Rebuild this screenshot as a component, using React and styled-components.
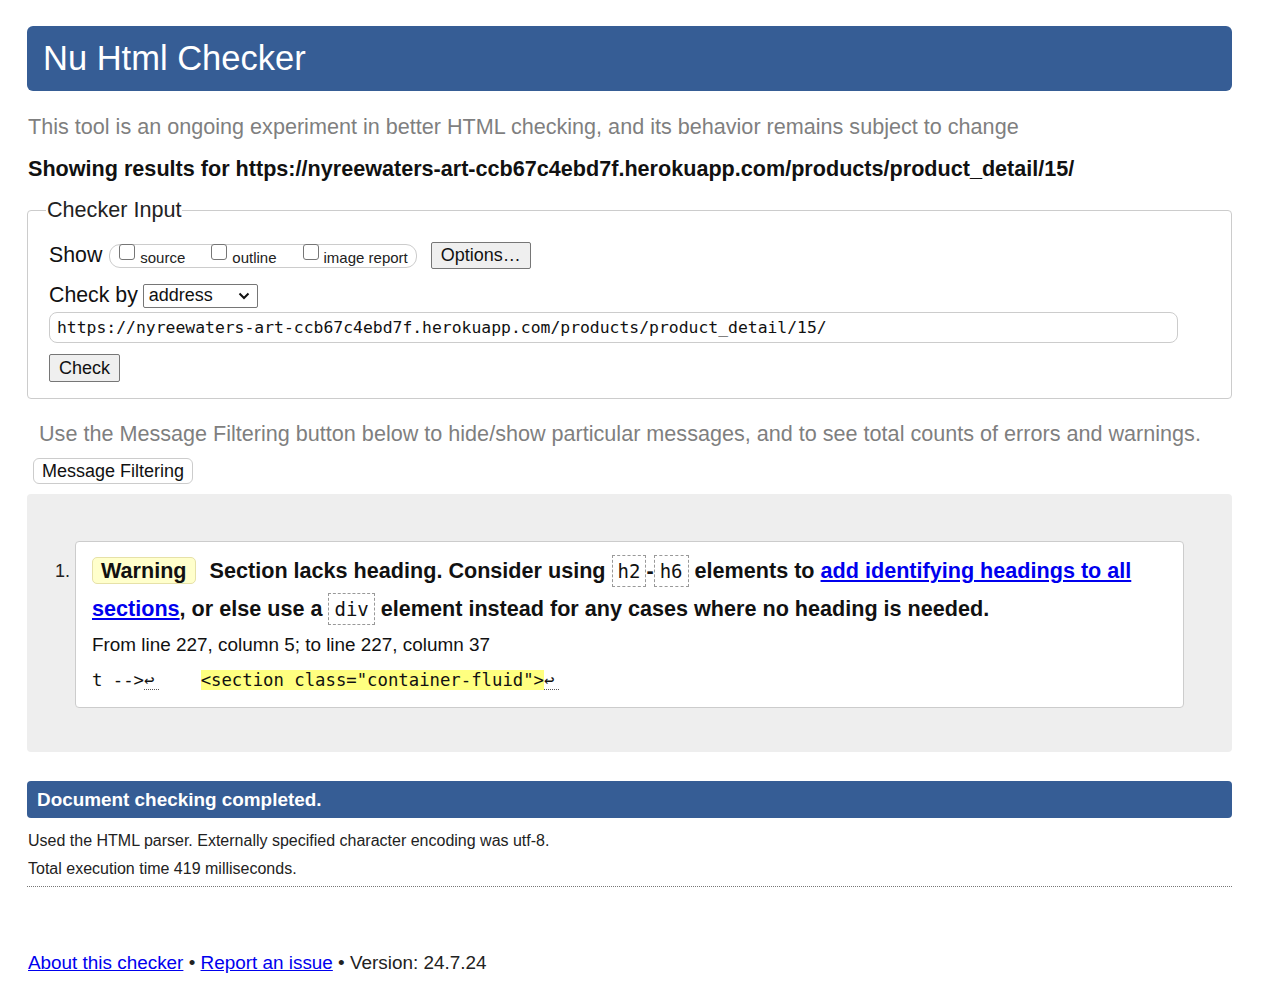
import React from "react";
import styled, { createGlobalStyle } from "styled-components";

const Global = createGlobalStyle`
  html, body { margin: 0; padding: 0; background: #fff; }
  body { font-family: Arial, "Liberation Sans", sans-serif; color: #111; }
`;

const Page = styled.div`
  padding: 26px 32px 0 27px;
`;

const Header = styled.h1`
  margin: 0;
  height: 65px;
  display: flex;
  align-items: center;
  padding: 0 16px;
  background: #365d95;
  color: #fff;
  font-size: 34.5px;
  font-weight: normal;
  border-radius: 6px;
`;

const Lead = styled.p`
  margin: ${(p) => p.$mt ?? 22}px 0 0 ${(p) => p.$indent || 1}px;
  font-size: 21.6px;
  color: #7f7f7f;
  line-height: 27px;
`;

const Results = styled.p`
  margin: 15px 0 0 1px;
  font-size: 21.6px;
  font-weight: bold;
  color: #111;
  line-height: 27px;
`;

const Fieldset = styled.fieldset`
  margin: 15px 0 0 0;
  border: 1px solid #ccc;
  border-radius: 4px;
  padding: 19px 21px 16px 21px;
`;

const Legend = styled.legend`
  font-size: 21.6px;
  padding: 0 1px;
  margin-left: -3px;
  color: #222;
`;

const Row = styled.div`
  display: flex;
  align-items: center;
  margin-top: ${(p) => p.$mt || 0}px;
`;

const Label = styled.span`
  font-size: 21.3px;
  color: #111;
  margin-right: ${(p) => p.$mr || 5}px;
`;

const Pill = styled.div`
  display: flex;
  align-items: center;
  height: 22px;
  border: 1px solid #ccc;
  border-radius: 11px;
  padding: 0 8px 0 9px;
  gap: 26px;
`;

const CheckLabel = styled.label`
  display: flex;
  align-items: flex-start;
  height: 22px;
  font-size: 15px;
  color: #222;
`;

const Box = styled.span`
  width: 16px;
  height: 16px;
  border: 1px solid #767676;
  border-radius: 3px;
  box-sizing: border-box;
  margin: -1px 5px 0 0;
  background: #fff;
`;

const BoxText = styled.span`
  align-self: flex-end;
  line-height: 19px;
`;

const Button = styled.button`
  font-family: Arial, "Liberation Sans", sans-serif;
  font-size: 18px;
  color: #111;
  background: #efefef;
  border: 1px solid #767676;
  border-radius: 2px;
  height: ${(p) => p.$h || 27}px;
  padding: 0 9px;
  margin-left: ${(p) => p.$ml || 0}px;
`;

const Select = styled.div`
  display: flex;
  align-items: center;
  justify-content: space-between;
  width: 115px;
  height: 24px;
  box-sizing: border-box;
  border: 1px solid #767676;
  border-radius: 2px;
  padding: 0 7px 0 5px;
  font-size: 18px;
  color: #111;
`;

const UrlInput = styled.div`
  margin-top: 4px;
  width: 1129px;
  height: 31px;
  box-sizing: border-box;
  border: 1px solid #ccc;
  border-radius: 8px;
  display: flex;
  align-items: center;
  padding-left: 7px;
  font-family: "DejaVu Sans Mono", "Liberation Mono", monospace;
  font-size: 16.4px;
  color: #111;
`;

const FilterButton = styled.button`
  margin: 11px 0 0 6px;
  font-family: Arial, "Liberation Sans", sans-serif;
  font-size: 18px;
  color: #111;
  background: #fff;
  border: 1px solid #ccc;
  border-radius: 6px;
  height: 26px;
  padding: 0 8px;
`;

const Panel = styled.div`
  margin-top: 10px;
  background: #eee;
  border-radius: 4px;
  padding: 47px 48px 44px 28px;
`;

const List = styled.ol`
  margin: 0;
  padding: 0;
  list-style: none;
`;

const Item = styled.li`
  display: flex;
  align-items: flex-start;
`;

const Num = styled.span`
  width: 20px;
  font-size: 18px;
  color: #222;
  padding-top: 20px;
`;

const Card = styled.div`
  flex: 1;
  background: #fff;
  border: 1px solid #ccc;
  border-radius: 4px;
  padding: 10px 16px 17px 16px;
`;

const Message = styled.p`
  margin: 0;
  font-size: 21.6px;
  font-weight: bold;
  line-height: 38px;
  color: #111;
`;

const Badge = styled.span`
  display: inline-block;
  background: #ffffcc;
  border: 1px solid #e6e1a8;
  border-radius: 5px;
  padding: 0 8px;
  line-height: 25px;
  margin-right: 8px;
`;

const Code = styled.code`
  font-family: "DejaVu Sans Mono", "Liberation Mono", monospace;
  font-weight: normal;
  font-size: 19px;
  border: 1px dashed #999;
  padding: 4px 5px;
`;

const Link = styled.a`
  color: #0000ee;
  text-decoration: underline;
`;

const Location = styled.p`
  margin: 6px 0 0 0;
  font-size: 18.9px;
  color: #111;
`;

const Extract = styled.pre`
  margin: 14px 0 0 0;
  font-family: "DejaVu Sans Mono", "Liberation Mono", monospace;
  font-size: 17.3px;
  color: #111;
  white-space: pre;
`;

const Lf = styled.span`
  display: inline-block;
  width: 15px;
  line-height: 18px;
  border-bottom: 1px dotted #555;
`;

const Mark = styled.b`
  font-weight: normal;
  background: #ffff80;
`;

const DoneBar = styled.h2`
  margin: 29px 0 0 0;
  height: 37px;
  display: flex;
  align-items: center;
  padding: 0 10px;
  background: #365d95;
  color: #fff;
  font-size: 18.9px;
  font-weight: bold;
  border-radius: 4px;
`;

const Details = styled.div`
  margin-top: 9px;
  border-bottom: 1px dotted #777;
  padding: 0 0 3px 1px;
`;

const Detail = styled.p`
  margin: 0;
  font-size: 16px;
  line-height: 28px;
  color: #222;
`;

const Footer = styled.p`
  margin: 65px 0 0 1px;
  font-size: 18.9px;
  color: #222;
`;

const Check = ({ label }) => (
  <CheckLabel>
    <Box />
    <BoxText>{label}</BoxText>
  </CheckLabel>
);

const Chevron = () => (
  <svg width="12" height="8" viewBox="0 0 12 8">
    <path d="M1.5 1.5 L6 6 L10.5 1.5" fill="none" stroke="#111" strokeWidth="2" />
  </svg>
);

export default function App() {
  const url = "https://nyreewaters-art-ccb67c4ebd7f.herokuapp.com/products/product_detail/15/";
  return (
    <Page>
      <Global />
      <Header>Nu Html Checker</Header>
      <Lead>This tool is an ongoing experiment in better HTML checking, and its behavior remains subject to change</Lead>
      <Results>Showing results for {url}</Results>
      <Fieldset>
        <Legend>Checker Input</Legend>
        <Row>
          <Label $mr={7}>Show</Label>
          <Pill>
            <Check label="source" />
            <Check label="outline" />
            <Check label="image report" />
          </Pill>
          <Button $ml={14}>Options…</Button>
        </Row>
        <Row $mt={14}>
          <Label $mr={5}>Check by</Label>
          <Select>
            address
            <Chevron />
          </Select>
        </Row>
        <UrlInput>{url}</UrlInput>
        <Row $mt={11}>
          <Button $h={28}>Check</Button>
        </Row>
      </Fieldset>
      <Lead $indent={12} $mt={21}>
        Use the Message Filtering button below to hide/show particular messages, and to see total counts of errors and warnings.
      </Lead>
      <FilterButton>Message Filtering</FilterButton>
      <Panel>
        <List>
          <Item>
            <Num>1.</Num>
            <Card>
              <Message>
                <Badge>Warning</Badge> Section lacks heading. Consider using <Code>h2</Code>-<Code>h6</Code> elements to{" "}
                <Link href="#">add identifying headings to all sections</Link>, or else use a <Code>div</Code> element
                instead for any cases where no heading is needed.
              </Message>
              <Location>From line 227, column 5; to line 227, column 37</Location>
              <Extract>
                {"t -->"}
                <Lf>↩</Lf>
                {"    "}
                <Mark>{'<section class="container-fluid">'}</Mark>
                <Lf>↩</Lf>
              </Extract>
            </Card>
          </Item>
        </List>
      </Panel>
      <DoneBar>Document checking completed.</DoneBar>
      <Details>
        <Detail>Used the HTML parser. Externally specified character encoding was utf-8.</Detail>
        <Detail>Total execution time 419 milliseconds.</Detail>
      </Details>
      <Footer>
        <Link href="#">About this checker</Link> • <Link href="#">Report an issue</Link> • Version: 24.7.24
      </Footer>
    </Page>
  );
}
